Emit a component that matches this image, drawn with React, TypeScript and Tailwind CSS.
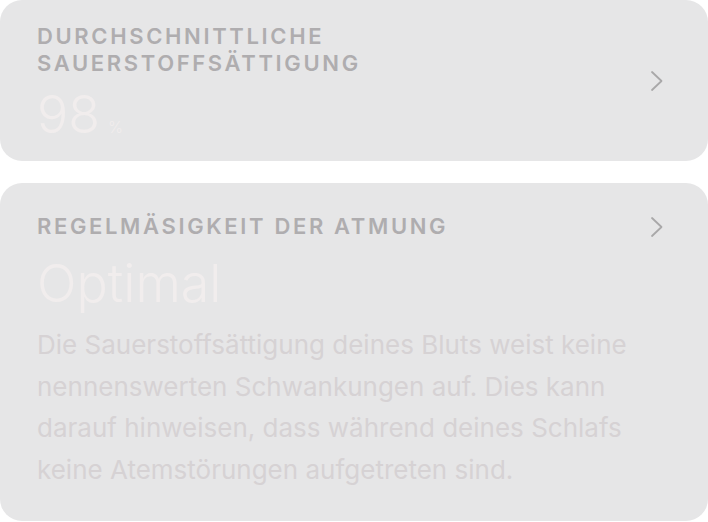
const heading = "font-['Inter',sans-serif] text-[22px] font-semibold leading-[27px] tracking-[0.12em] text-[#afadaf] uppercase";

function Chevron() {
  return (
    <svg width="14" height="22" viewBox="0 0 14 22" fill="none" className="shrink-0">
      <polyline points="2,2 11.5,11 2,20" stroke="#a9a8a9" strokeWidth="1.8" strokeLinecap="round" strokeLinejoin="round" />
    </svg>
  );
}

export default function App() {
  return (
    <div className="flex w-[708px] flex-col gap-[22px] bg-white font-['Inter',sans-serif]">
      {/* Average oxygen saturation */}
      <section className="flex h-[161px] items-center rounded-[22px] bg-[#e6e6e7] pl-[37px] pr-[44px]">
        <div className="flex flex-1 flex-col pt-[6px]">
          <h2 className={heading}>
            Durchschnittliche
            <br />
            Sauerstoffsättigung
          </h2>
          <div className="mt-[9px] flex items-baseline gap-[8px] text-[#f1eded]">
            <span className="text-[52px] font-light leading-[58px]">98</span>
            <span className="text-[16px] font-light">%</span>
          </div>
        </div>
        <Chevron />
      </section>

      {/* Breathing regularity */}
      <section className="flex h-[338px] flex-col rounded-[22px] bg-[#e6e6e7] pl-[37px] pr-[44px] pt-[30px]">
        <div className="flex items-center justify-between">
          <h2 className={heading}>Regelmäsigkeit der Atmung</h2>
          <Chevron />
        </div>
        <p className="mt-[14px] text-[52px] font-light leading-[60px] text-[#f1eded]">Optimal</p>
        <p className="mt-[10px] w-[640px] text-[26px] leading-[41.5px] text-[#d6d2d4]">
          Die Sauerstoffsättigung deines Bluts weist keine nennenswerten Schwankungen auf. Dies kann
          darauf hinweisen, dass während deines Schlafs keine Atemstörungen aufgetreten sind.
        </p>
      </section>
    </div>
  );
}
